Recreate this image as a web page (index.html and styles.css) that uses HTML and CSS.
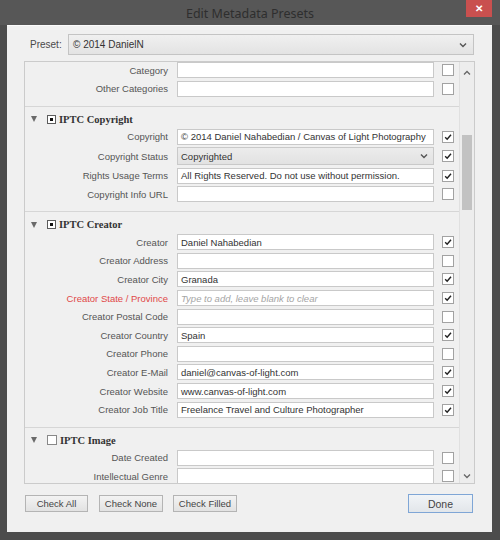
FILE: index.html
```html
<!DOCTYPE html>
<html>
<head>
<meta charset="utf-8">
<link rel="stylesheet" href="styles.css">
</head>
<body>
<div class="window">
  <div class="titlebar">
    <span class="title">Edit Metadata Presets</span>
    <div class="close">&#x2715;</div>
  </div>
  <div class="dialog">
    <div class="preset-row">
      <span class="preset-label">Preset:</span>
      <div class="preset-select">
        <span>© 2014 DanielN</span>
        <svg class="chev" width="8" height="6" viewBox="0 0 8 6"><path d="M1 1.5 L4 4.5 L7 1.5" fill="none" stroke="#555" stroke-width="1.4"/></svg>
      </div>
    </div>

    <div class="panel">
      <div class="content">
        <div class="section first">
          <div class="row"><span class="lbl">Category</span><div class="field"></div><span class="cb"></span></div>
          <div class="row"><span class="lbl">Other Categories</span><div class="field"></div><span class="cb"></span></div>
        </div>

        <div class="section">
          <div class="head"><span class="tri"></span><span class="hbox on"></span><span class="htext">IPTC Copyright</span></div>
          <div class="row"><span class="lbl">Copyright</span><div class="field">© 2014 Daniel Nahabedian / Canvas of Light Photography</div><span class="cb on"><svg viewBox="0 0 12 12"><path d="M2.6 6.2 L5 8.6 L9.6 3.2" fill="none" stroke="#222" stroke-width="1.7"/></svg></span></div>
          <div class="row tall"><span class="lbl">Copyright Status</span><div class="field select">Copyrighted<svg class="chev" width="8" height="6" viewBox="0 0 8 6"><path d="M1 1.5 L4 4.5 L7 1.5" fill="none" stroke="#555" stroke-width="1.4"/></svg></div><span class="cb on"><svg viewBox="0 0 12 12"><path d="M2.6 6.2 L5 8.6 L9.6 3.2" fill="none" stroke="#222" stroke-width="1.7"/></svg></span></div>
          <div class="row"><span class="lbl">Rights Usage Terms</span><div class="field">All Rights Reserved. Do not use without permission.</div><span class="cb on"><svg viewBox="0 0 12 12"><path d="M2.6 6.2 L5 8.6 L9.6 3.2" fill="none" stroke="#222" stroke-width="1.7"/></svg></span></div>
          <div class="row"><span class="lbl">Copyright Info URL</span><div class="field"></div><span class="cb"></span></div>
        </div>

        <div class="section">
          <div class="head"><span class="tri"></span><span class="hbox on"></span><span class="htext">IPTC Creator</span></div>
          <div class="row"><span class="lbl">Creator</span><div class="field">Daniel Nahabedian</div><span class="cb on"><svg viewBox="0 0 12 12"><path d="M2.6 6.2 L5 8.6 L9.6 3.2" fill="none" stroke="#222" stroke-width="1.7"/></svg></span></div>
          <div class="row"><span class="lbl">Creator Address</span><div class="field"></div><span class="cb"></span></div>
          <div class="row"><span class="lbl">Creator City</span><div class="field">Granada</div><span class="cb on"><svg viewBox="0 0 12 12"><path d="M2.6 6.2 L5 8.6 L9.6 3.2" fill="none" stroke="#222" stroke-width="1.7"/></svg></span></div>
          <div class="row"><span class="lbl red">Creator State / Province</span><div class="field ph">Type to add, leave blank to clear</div><span class="cb on"><svg viewBox="0 0 12 12"><path d="M2.6 6.2 L5 8.6 L9.6 3.2" fill="none" stroke="#222" stroke-width="1.7"/></svg></span></div>
          <div class="row"><span class="lbl">Creator Postal Code</span><div class="field"></div><span class="cb"></span></div>
          <div class="row"><span class="lbl">Creator Country</span><div class="field">Spain</div><span class="cb on"><svg viewBox="0 0 12 12"><path d="M2.6 6.2 L5 8.6 L9.6 3.2" fill="none" stroke="#222" stroke-width="1.7"/></svg></span></div>
          <div class="row"><span class="lbl">Creator Phone</span><div class="field"></div><span class="cb"></span></div>
          <div class="row"><span class="lbl">Creator E-Mail</span><div class="field">daniel@canvas-of-light.com</div><span class="cb on"><svg viewBox="0 0 12 12"><path d="M2.6 6.2 L5 8.6 L9.6 3.2" fill="none" stroke="#222" stroke-width="1.7"/></svg></span></div>
          <div class="row"><span class="lbl">Creator Website</span><div class="field">www.canvas-of-light.com</div><span class="cb on"><svg viewBox="0 0 12 12"><path d="M2.6 6.2 L5 8.6 L9.6 3.2" fill="none" stroke="#222" stroke-width="1.7"/></svg></span></div>
          <div class="row"><span class="lbl">Creator Job Title</span><div class="field">Freelance Travel and Culture Photographer</div><span class="cb on"><svg viewBox="0 0 12 12"><path d="M2.6 6.2 L5 8.6 L9.6 3.2" fill="none" stroke="#222" stroke-width="1.7"/></svg></span></div>
        </div>

        <div class="section last">
          <div class="head"><span class="tri"></span><span class="hbox big"></span><span class="htext">IPTC Image</span></div>
          <div class="row"><span class="lbl">Date Created</span><div class="field"></div><span class="cb"></span></div>
          <div class="row"><span class="lbl">Intellectual Genre</span><div class="field"></div><span class="cb"></span></div>
        </div>
      </div>
      <div class="scrollbar">
        <svg class="arrow" width="8" height="6" viewBox="0 0 8 6"><path d="M1 4.5 L4 1.5 L7 4.5" fill="none" stroke="#666" stroke-width="1.3"/></svg>
        <div class="track"><div class="thumb"></div></div>
        <svg class="arrow" width="8" height="6" viewBox="0 0 8 6"><path d="M1 1.5 L4 4.5 L7 1.5" fill="none" stroke="#666" stroke-width="1.3"/></svg>
      </div>
    </div>

    <div class="footer">
      <div class="btn w63">Check All</div>
      <div class="btn w64 g11">Check None</div>
      <div class="btn w64 g10">Check Filled</div>
      <div class="btn done">Done</div>
    </div>
  </div>
</div>
</body>
</html>
```

FILE: styles.css
```css
* { box-sizing: border-box; }
body {
  margin: 0;
  width: 500px;
  height: 540px;
  overflow: hidden;
  background: #4c4c4c;
  font-family: "Liberation Sans", Arial, sans-serif;
}
.window {
  width: 500px;
  height: 540px;
  display: flex;
  flex-direction: column;
}
.titlebar {
  position: relative;
  height: 25px;
  background: #575757;
  display: flex;
  align-items: center;
  justify-content: center;
}
.title {
  font-family: "Noto Sans", "Open Sans", sans-serif;
  font-size: 12.5px;
  color: #2e2e2e;
  margin-top: 1px;
}
.close {
  position: absolute;
  right: 8px;
  top: 0;
  width: 26px;
  height: 17px;
  background: #c9504f;
  color: #fff;
  font-size: 10px;
  font-weight: bold;
  display: flex;
  align-items: center;
  justify-content: center;
}
.dialog {
  margin: 0 8px 0 7px;
  height: 507px;
  background: #f0f0f0;
  border-top: 1px solid #fbfbfb;
  display: flex;
  flex-direction: column;
}
.preset-row {
  display: flex;
  align-items: center;
  height: 21px;
  margin: 8px 0 0 23px;
}
.preset-label {
  width: 38px;
  font-size: 10px;
  color: #4a4a4a;
}
.preset-select {
  width: 406px;
  height: 21px;
  border: 1px solid #c4c4c4;
  background: linear-gradient(#f0f0f0, #e3e3e3);
  display: flex;
  align-items: center;
  justify-content: space-between;
  padding: 0 6px 0 4px;
  font-size: 10px;
  color: #333;
}
.panel {
  margin: 6px 0 0 17px;
  width: 451px;
  height: 423px;
  border: 1px solid #cbcbcb;
  display: flex;
  overflow: hidden;
}
.content {
  width: 434px;
  display: flex;
  flex-direction: column;
  overflow: hidden;
}
.section {
  border-bottom: 1px solid #d6d6d6;
  padding-bottom: 8px;
  flex-shrink: 0;
}
.section.first { margin-top: -1px; }
.section.last { border-bottom: none; }
.head {
  height: 20.5px;
  display: flex;
  align-items: center;
  padding-top: 4px;
}
.tri {
  width: 0;
  height: 0;
  margin-left: 6px;
  border-left: 3.5px solid transparent;
  border-right: 3.5px solid transparent;
  border-top: 6px solid #6a6a6a;
}
.hbox {
  width: 9px;
  height: 9px;
  margin-left: 10px;
  border: 1px solid #5c5c5c;
  background: #fff;
  display: flex;
  align-items: center;
  justify-content: center;
}
.hbox.on::after {
  content: "";
  width: 3px;
  height: 3px;
  background: #111;
}
.hbox.big {
  width: 10px;
  height: 10px;
  border-color: #888;
}
.htext {
  margin-left: 3px;
  font-family: "Liberation Serif", "Times New Roman", serif;
  font-weight: bold;
  font-size: 10.5px;
  color: #333;
}
.row {
  height: 18.6px;
  display: grid;
  grid-template-columns: 143px 266px 20px;
  align-items: center;
}
.row.tall { height: 20px; }
.lbl {
  text-align: right;
  font-size: 9.5px;
  color: #555;
  white-space: nowrap;
}
.lbl.red { color: #e04848; }
.field {
  margin-left: 9px;
  width: 257px;
  height: 16px;
  background: #fff;
  border: 1px solid #c9c9c9;
  font-size: 9.5px;
  color: #333;
  padding-left: 3px;
  display: flex;
  align-items: center;
  white-space: nowrap;
  overflow: hidden;
}
.field.select {
  height: 18px;
  background: linear-gradient(#ececec, #e2e2e2);
  justify-content: space-between;
  padding-right: 5px;
}
.field.ph {
  color: #a5a5a5;
  font-style: italic;
}
.cb {
  margin-left: 8px;
  width: 12px;
  height: 12px;
  border: 1px solid #a2a2a2;
  background: #fff;
  display: block;
}
.cb svg { width: 10px; height: 10px; display: block; }
.scrollbar {
  width: 15px;
  border-left: 1px solid #e0e0e0;
  background: #ededed;
  display: flex;
  flex-direction: column;
  align-items: center;
}
.arrow { margin: 8px 0 5px; flex-shrink: 0; }
.scrollbar .arrow:last-child { margin: 5px 0 4px; }
.track {
  flex: 1;
  width: 100%;
}
.thumb {
  margin: 54px 0 0 2px;
  width: 10px;
  height: 75px;
  background: #c2c2c2;
}
.footer {
  display: flex;
  align-items: center;
  height: 19px;
  margin: 10px 19px 0 18px;
}
.btn {
  height: 17px;
  border: 1px solid #b4b4b4;
  background: linear-gradient(#f3f3f3, #e2e2e2);
  font-size: 9.5px;
  color: #444;
  display: flex;
  align-items: center;
  justify-content: center;
}
.w63 { width: 63px; }
.w64 { width: 64px; }
.g11 { margin-left: 11px; }
.g10 { margin-left: 10px; }
.btn.done {
  margin-left: auto;
  width: 65px;
  height: 19px;
  border-color: #7fa6d6;
  font-size: 10.5px;
  background: linear-gradient(#f1f4f7, #e2e6ea);
}
```
